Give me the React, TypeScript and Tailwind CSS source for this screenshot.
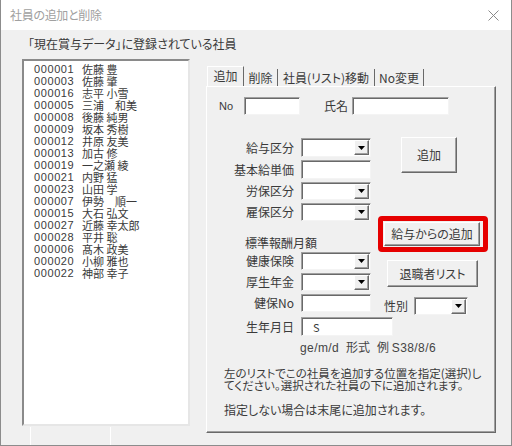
import React from "react";

const employees: [string, string][] = [
  ["000001", "佐藤 豊"],
  ["000003", "佐藤 肇"],
  ["000016", "志平 小雪"],
  ["000005", "三浦　和美"],
  ["000008", "後藤 純男"],
  ["000009", "坂本 秀樹"],
  ["000012", "井原 友美"],
  ["000013", "加古 修"],
  ["000019", "一之瀬 綾"],
  ["000021", "内野 猛"],
  ["000023", "山田 学"],
  ["000007", "伊勢　順一"],
  ["000015", "大石 弘文"],
  ["000027", "近藤 幸太郎"],
  ["000028", "平井 聡"],
  ["000006", "髙木 政美"],
  ["000020", "小柳 雅也"],
  ["000022", "神部 幸子"],
];

const sunken =
  "bg-white border border-t-[#a0a0a0] border-l-[#a0a0a0] border-r-[#f4f4f4] border-b-[#f4f4f4] shadow-[inset_1px_1px_0_#696969]";
const raised =
  "bg-[#f0f0f0] border border-t-white border-l-white border-r-[#696969] border-b-[#696969] shadow-[inset_-1px_-1px_0_#a0a0a0]";

function TextBox({ w, h = 19, children }: { w: number; h?: number; children?: React.ReactNode }) {
  return (
    <div className={`${sunken} flex items-center pl-[11px] text-[11px]`} style={{ width: w, height: h }}>
      {children}
    </div>
  );
}

function Combo({ w, h = 19 }: { w: number; h?: number }) {
  return (
    <div className={`${sunken} flex items-center justify-end pr-[1px]`} style={{ width: w, height: h }}>
      <div className={`${raised} w-[15px] h-[15px] flex items-center justify-center`}>
        <svg width="7" height="4" viewBox="0 0 7 4">
          <path d="M0 0h7L3.5 4z" fill="#000" />
        </svg>
      </div>
    </div>
  );
}

function Row({
  label,
  mt,
  children,
  h = 19,
}: {
  label: string;
  mt: number;
  children: React.ReactNode;
  h?: number;
}) {
  return (
    <div className="flex items-center" style={{ marginTop: mt, height: h }}>
      <span className="w-[87px] text-right whitespace-nowrap">{label}</span>
      <div className="ml-[7px]">{children}</div>
    </div>
  );
}

export default function App() {
  return (
    <div className="w-[512px] h-[446px] bg-[#f0f0f0] overflow-hidden border-l border-r border-b border-[#8c8c8c] text-[12px] leading-[16px] text-[#3a3a3a] font-['Noto_Sans_CJK_JP',sans-serif] [font-feature-settings:'palt']">
      {/* title bar */}
      <div className="h-[30px] bg-white flex items-center justify-between pl-[9px] pr-[12px]">
        <span className="text-[12px] text-[#a0a0a0] tracking-[-0.3px]">社員の追加と削除</span>
        <svg width="11" height="11" viewBox="0 0 11 11">
          <path d="M0.5 0.5l10 10M10.5 0.5l-10 10" stroke="#8a8a8a" strokeWidth="1" />
        </svg>
      </div>

      <div className="pl-[21px]">
        <div className="pt-[6px] pl-[6px] h-[22px] leading-[16px]">「現在賞与データ」に登録されている社員</div>

        <div className="flex mt-[7px]">
          {/* employee list */}
          <div className="flex flex-col">
            <div className="w-[168px] h-[367px] bg-white border-2 border-t-[#8a8a8a] border-l-[#8a8a8a] border-r-[#e6e6e6] border-b-[#e6e6e6] pt-[2px] pl-[10px]">
              {employees.map(([no, name]) => (
                <div key={no} className="flex items-center h-[12px] leading-[11px] text-[11px] text-[#3a3a3a]">
                  <span className="w-[48px] font-['Liberation_Sans',sans-serif] tracking-[0.6px]">{no}</span>
                  <span className="whitespace-pre">{name}</span>
                </div>
              ))}
            </div>
            <div className="ml-[8px] mt-[1px] w-[81px] h-[19px] border-l border-r border-white" />
          </div>

          {/* tab control */}
          <div className="ml-[16px] mt-[7px] flex flex-col">
            <div className="flex items-end h-[20px] pl-[1px]">
              <div className="h-[20px] w-[37px] border-t border-l border-white border-r border-r-[#696969] flex items-center justify-center pb-[1px] bg-[#f0f0f0]">
                追加
              </div>
              <div className="h-[17px] w-[34px] border-r border-[#696969] flex items-center justify-center">削除</div>
              <div className="h-[17px] w-[97px] border-r border-[#696969] flex items-center justify-center whitespace-nowrap">
                社員(リスト)移動
              </div>
              <div className="h-[17px] w-[49px] border-r border-[#696969] flex items-center justify-center">No変更</div>
            </div>

            <div className="w-[290px] h-[347px] border border-t-white border-l-white border-r-[#696969] border-b-[#696969] shadow-[inset_-1px_-1px_0_#a0a0a0] flex flex-col">
              {/* number & name */}
              <div className="flex items-center h-[18px] mt-[10px]">
                <span className="w-[26px] text-right font-['Liberation_Sans',sans-serif] text-[11px]">No</span>
                <div className="ml-[11px]">
                  <TextBox w={56} h={18} />
                </div>
                <span className="ml-[24px] w-[24px]">氏名</span>
                <div className="ml-[4px]">
                  <TextBox w={97} h={18} />
                </div>
              </div>

              <div className="flex mt-[23px]">
                {/* field column */}
                <div className="flex flex-col w-[164px]">
                  <Row label="給与区分" mt={0}>
                    <Combo w={70} />
                  </Row>
                  <Row label="基本給単価" mt={3}>
                    <TextBox w={70} />
                  </Row>
                  <Row label="労保区分" mt={3} h={18}>
                    <Combo w={70} h={18} />
                  </Row>
                  <Row label="雇保区分" mt={3} h={18}>
                    <Combo w={70} h={18} />
                  </Row>
                  <div className="mt-[14px] pl-[38px] h-[16px]">標準報酬月額</div>
                  <Row label="健康保険" mt={1} h={18}>
                    <Combo w={70} h={18} />
                  </Row>
                  <Row label="厚生年金" mt={3} h={18}>
                    <Combo w={70} h={18} />
                  </Row>
                  <Row label="健保No" mt={3} h={18}>
                    <TextBox w={70} h={18} />
                  </Row>
                </div>

                {/* button column */}
                <div className="flex flex-col ml-[7px]">
                  <div className={`${raised} ml-[23px] mt-[-1px] w-[56px] h-[36px] flex items-center justify-center`}>追加</div>
                  <div className="mt-[43px] w-[110px] border-[5px] border-[#e60000] rounded-[4px] p-[1px]">
                    <div className={`${raised} w-[96px] h-[24px] flex items-center justify-center whitespace-nowrap`}>
                      給与からの追加
                    </div>
                  </div>
                  <div className={`${raised} ml-[9px] mt-[8px] w-[91px] h-[27px] flex items-center justify-center`}>退職者リスト</div>
                  <div className="flex items-center mt-[10px] ml-[6px] h-[18px]">
                    <span className="w-[24px]">性別</span>
                    <div className="ml-[6px]">
                      <Combo w={54} h={18} />
                    </div>
                  </div>
                </div>
              </div>

              <Row label="生年月日" mt={2}>
                <TextBox w={92}>S</TextBox>
              </Row>
              <div className="mt-[3px] ml-[93px] h-[16px] text-[12px] text-[#444] whitespace-nowrap">
                <span className="font-['Liberation_Sans',sans-serif] tracking-[0.4px]">ge/m/d</span>
                <span className="ml-[7px]">形式</span>
                <span className="ml-[7px]">例 </span>
                <span className="font-['Liberation_Sans',sans-serif] tracking-[0.4px]">S38/8/6</span>
              </div>
              <div className="mt-[12px] ml-[17px] text-[11.5px] leading-[12px] whitespace-nowrap">
                <div>左のリストでこの社員を追加する位置を指定(選択)し</div>
                <div>てください。選択された社員の下に追加されます。</div>
              </div>
              <div className="mt-[12px] ml-[17px] text-[12px] leading-[14px]">指定しない場合は末尾に追加されます。</div>
            </div>
          </div>
        </div>
      </div>
    </div>
  );
}
